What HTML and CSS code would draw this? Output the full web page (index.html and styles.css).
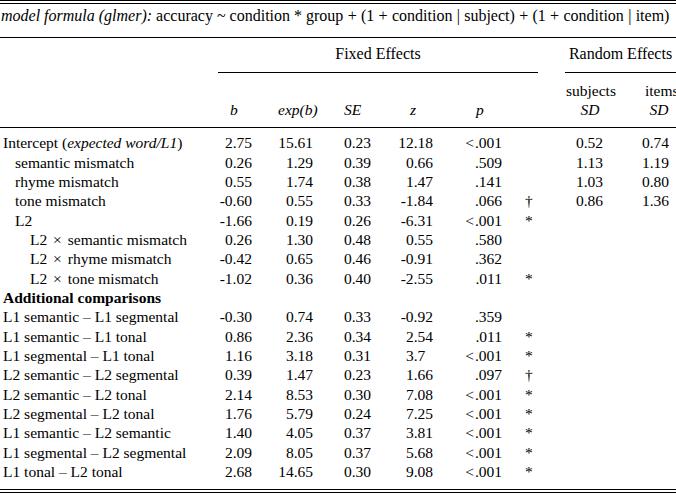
FILE: index.html
```html
<!DOCTYPE html>
<html lang="en">
<head>
<meta charset="utf-8">
<title>Model table</title>
<link rel="stylesheet" href="styles.css">
</head>
<body>
<div class="frame">
<table class="stats">
  <colgroup>
    <col class="c-label"><col class="c-b"><col class="c-exp"><col class="c-se"><col class="c-z"><col class="c-p"><col class="c-sig"><col class="c-gap"><col class="c-subj"><col class="c-items">
  </colgroup>
  <thead>
    <tr class="r-formula">
      <td colspan="10" class="formula"><i>model formula (glmer):</i> accuracy ~ condition * group <span class="op">+</span> (1 <span class="op">+</span> condition <span class="op">|</span> subject) <span class="op">+</span> (1 <span class="op">+</span> condition <span class="op">|</span> item)</td>
    </tr>
    <tr class="r-group">
      <td></td>
      <td colspan="6" class="grp"><div class="grp-fixed">Fixed Effects</div></td>
      <td></td>
      <td colspan="2" class="grp"><div class="grp-random">Random Effects</div></td>
    </tr>
    <tr class="r-cols">
      <td></td>
      <td class="h h-b"><i>b</i></td>
      <td class="h h-exp"><i>exp(b)</i></td>
      <td class="h h-se"><i>SE</i></td>
      <td class="h h-z"><i>z</i></td>
      <td class="h h-p"><i>p</i></td>
      <td></td>
      <td></td>
      <td class="h h-subj">subjects<br><i>SD</i></td>
      <td class="h h-items">items<br><i>SD</i></td>
    </tr>
  </thead>
  <tbody>
    <tr class="first">
      <td class="lab l0">Intercept (<i>expected word/L1</i>)</td>
      <td class="n">2.75</td><td class="n">15.61</td><td class="n">0.23</td><td class="n">12.18</td><td class="n"><span class="lt">&lt;</span>.001</td><td class="sig"></td><td></td><td class="n sd1">0.52</td><td class="n sd2">0.74</td>
    </tr>
    <tr>
      <td class="lab l1">semantic mismatch</td>
      <td class="n">0.26</td><td class="n">1.29</td><td class="n">0.39</td><td class="n">0.66</td><td class="n">.509</td><td class="sig"></td><td></td><td class="n sd1">1.13</td><td class="n sd2">1.19</td>
    </tr>
    <tr>
      <td class="lab l1">rhyme mismatch</td>
      <td class="n">0.55</td><td class="n">1.74</td><td class="n">0.38</td><td class="n">1.47</td><td class="n">.141</td><td class="sig"></td><td></td><td class="n sd1">1.03</td><td class="n sd2">0.80</td>
    </tr>
    <tr>
      <td class="lab l1">tone mismatch</td>
      <td class="n">-0.60</td><td class="n">0.55</td><td class="n">0.33</td><td class="n">-1.84</td><td class="n">.066</td><td class="sig">†</td><td></td><td class="n sd1">0.86</td><td class="n sd2">1.36</td>
    </tr>
    <tr>
      <td class="lab l1">L2</td>
      <td class="n">-1.66</td><td class="n">0.19</td><td class="n">0.26</td><td class="n">-6.31</td><td class="n"><span class="lt">&lt;</span>.001</td><td class="sig">*</td><td></td><td></td><td></td>
    </tr>
    <tr>
      <td class="lab l2">L2 <span class="times">×</span> semantic mismatch</td>
      <td class="n">0.26</td><td class="n">1.30</td><td class="n">0.48</td><td class="n">0.55</td><td class="n">.580</td><td class="sig"></td><td></td><td></td><td></td>
    </tr>
    <tr>
      <td class="lab l2">L2 <span class="times">×</span> rhyme mismatch</td>
      <td class="n">-0.42</td><td class="n">0.65</td><td class="n">0.46</td><td class="n">-0.91</td><td class="n">.362</td><td class="sig"></td><td></td><td></td><td></td>
    </tr>
    <tr>
      <td class="lab l2">L2 <span class="times">×</span> tone mismatch</td>
      <td class="n">-1.02</td><td class="n">0.36</td><td class="n">0.40</td><td class="n">-2.55</td><td class="n">.011</td><td class="sig">*</td><td></td><td></td><td></td>
    </tr>
    <tr>
      <td class="lab l0 section" colspan="10">Additional comparisons</td>
    </tr>
    <tr>
      <td class="lab l0">L1 semantic – L1 segmental</td>
      <td class="n">-0.30</td><td class="n">0.74</td><td class="n">0.33</td><td class="n">-0.92</td><td class="n">.359</td><td class="sig"></td><td></td><td></td><td></td>
    </tr>
    <tr>
      <td class="lab l0">L1 semantic – L1 tonal</td>
      <td class="n">0.86</td><td class="n">2.36</td><td class="n">0.34</td><td class="n">2.54</td><td class="n">.011</td><td class="sig">*</td><td></td><td></td><td></td>
    </tr>
    <tr>
      <td class="lab l0">L1 segmental – L1 tonal</td>
      <td class="n">1.16</td><td class="n">3.18</td><td class="n">0.31</td><td class="n"><span class="dec1">3.7</span></td><td class="n"><span class="lt">&lt;</span>.001</td><td class="sig">*</td><td></td><td></td><td></td>
    </tr>
    <tr>
      <td class="lab l0">L2 semantic – L2 segmental</td>
      <td class="n">0.39</td><td class="n">1.47</td><td class="n">0.23</td><td class="n">1.66</td><td class="n">.097</td><td class="sig">†</td><td></td><td></td><td></td>
    </tr>
    <tr>
      <td class="lab l0">L2 semantic – L2 tonal</td>
      <td class="n">2.14</td><td class="n">8.53</td><td class="n">0.30</td><td class="n">7.08</td><td class="n"><span class="lt">&lt;</span>.001</td><td class="sig">*</td><td></td><td></td><td></td>
    </tr>
    <tr>
      <td class="lab l0">L2 segmental – L2 tonal</td>
      <td class="n">1.76</td><td class="n">5.79</td><td class="n">0.24</td><td class="n">7.25</td><td class="n"><span class="lt">&lt;</span>.001</td><td class="sig">*</td><td></td><td></td><td></td>
    </tr>
    <tr>
      <td class="lab l0">L1 semantic – L2 semantic</td>
      <td class="n">1.40</td><td class="n">4.05</td><td class="n">0.37</td><td class="n">3.81</td><td class="n"><span class="lt">&lt;</span>.001</td><td class="sig">*</td><td></td><td></td><td></td>
    </tr>
    <tr>
      <td class="lab l0">L1 segmental – L2 segmental</td>
      <td class="n">2.09</td><td class="n">8.05</td><td class="n">0.37</td><td class="n">5.68</td><td class="n"><span class="lt">&lt;</span>.001</td><td class="sig">*</td><td></td><td></td><td></td>
    </tr>
    <tr class="last">
      <td class="lab l0">L1 tonal – L2 tonal</td>
      <td class="n">2.68</td><td class="n">14.65</td><td class="n">0.30</td><td class="n">9.08</td><td class="n"><span class="lt">&lt;</span>.001</td><td class="sig">*</td><td></td><td></td><td></td>
    </tr>
  </tbody>
</table>
</div>
</body>
</html>
```

FILE: styles.css
```css
html, body {
  margin: 0;
  padding: 0;
  background: #fff;
}
body {
  font-family: "Liberation Serif", "Times New Roman", serif;
  font-size: 15.5px;
  color: #000;
}
.frame {
  width: 676px;
  overflow: hidden;
  border-top: 4px double #000;
  border-bottom: 4px double #000;
}
.stats {
  width: 700px;
  table-layout: fixed;
  border-collapse: collapse;
  border-spacing: 0;
}
.stats td {
  padding: 0;
  white-space: nowrap;
  vertical-align: top;
}
.c-label { width: 215px; }
.c-b { width: 37px; }
.c-exp { width: 61px; }
.c-se { width: 58px; }
.c-z { width: 62px; }
.c-p { width: 69px; }
.c-sig { width: 38px; }
.c-gap { width: 25px; }
.c-subj { width: 57px; }
.c-items { width: 78px; }

.r-formula td {
  padding: 2px 0 12px 1px;
  line-height: 19px;
  font-size: 16px;
  border-bottom: 1px solid #000;
}
.op { margin: 0 0.3px; }
.r-group td {
  padding-top: 6px;
  line-height: 19px;
  font-size: 16px;
}
.grp { text-align: center; }
.grp-fixed,
.grp-random {
  padding-bottom: 9px;
  border-bottom: 1px solid #000;
}
.grp-fixed { margin: 0 2px 0 3px; }
.grp-random { margin-right: 24px; }

.r-cols td {
  padding-top: 7.5px;
  padding-bottom: 7.5px;
  line-height: 19.5px;
  vertical-align: bottom;
  border-bottom: 1px solid #000;
}
.h { text-align: left; }
.h-b { padding-left: 15px !important; }
.h-exp { padding-left: 26px !important; }
.h-se { padding-left: 31px !important; }
.h-z { padding-left: 39px !important; }
.h-p { padding-left: 43px !important; }
.h-subj { text-align: center; padding-left: 1px !important; padding-right: 8px !important; }
.h-items { text-align: center; padding-left: 23px !important; padding-right: 27px !important; }

tbody td {
  line-height: 19.35px;
}
tbody tr.first td { padding-top: 5.3px; }
tbody tr.last td { padding-bottom: 7.4px; }
.n { text-align: right; }
.lt { margin-right: 1px; }
.sd1 { padding-right: 19px !important; }
.sd2 { padding-right: 31px !important; }
.sig { padding-left: 23px !important; }
.dec1 { padding-right: 0.5em; }
.l0 { padding-left: 3px !important; }
.l1 { padding-left: 15px !important; }
.l2 { padding-left: 30px !important; }
.times { margin: 0 2px; }
.section { font-weight: bold; }
```
